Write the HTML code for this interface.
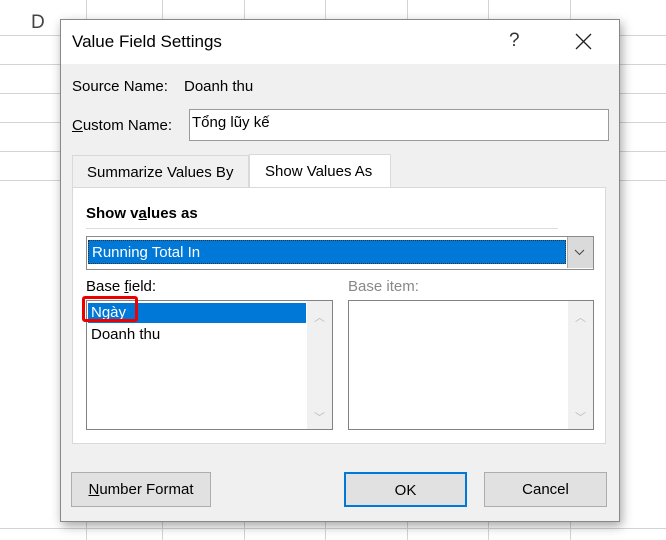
<!DOCTYPE html>
<html><head><meta charset="utf-8"><style>
body{margin:0;width:666px;height:540px;overflow:hidden;background:#fff;font-family:"Liberation Sans",sans-serif;position:relative;font-size:14px;color:#000}
.a{position:absolute}
.h{position:absolute;left:0;width:666px;height:1px;background:#d4d4d4}
.v{position:absolute;top:0;height:540px;width:1px;background:#d4d4d4}
.dlg{position:absolute;left:60px;top:19px;width:558px;height:501px;background:#f0f0f0;border:1px solid #888;box-shadow:2px 4px 10px rgba(0,0,0,.35)}
.btn{position:absolute;background:#e1e1e1;border:1px solid #adadad;text-align:center;line-height:33px;font-size:15px}
.list{position:absolute;background:#fff;border:1px solid #828282}
.sb{position:absolute;right:0;top:0;bottom:0;width:25px;background:#f0f0f0;color:#bbb;font-size:11px;text-align:center}
</style></head><body>
<div class="h" style="top:35px"></div><div class="h" style="top:64px"></div><div class="h" style="top:93px"></div><div class="h" style="top:122px"></div><div class="h" style="top:151px"></div><div class="h" style="top:180px"></div><div class="h" style="top:528px"></div>
<div class="v" style="left:86px"></div><div class="v" style="left:162px"></div><div class="v" style="left:244px"></div><div class="v" style="left:325px"></div><div class="v" style="left:407px"></div><div class="v" style="left:488px"></div><div class="v" style="left:570px"></div>
<div class="a" style="left:31px;top:12px;font-size:19px;color:#444">D</div>
<div class="dlg">
 <div class="a" style="left:0;top:0;width:558px;height:44px;background:#fff"></div>
 <div class="a" style="left:11px;top:12px;font-size:17px">Value Field Settings</div>
 <div class="a" style="left:448px;top:10px;font-size:19px;color:#333">?</div>
 <svg class="a" style="left:514px;top:13px" width="17" height="17"><path d="M1 1L16 16M16 1L1 16" stroke="#222" stroke-width="1.3"/></svg>
 <div class="a" style="left:11px;top:58px;font-size:15px">Source Name:</div>
 <div class="a" style="left:123px;top:58px;font-size:15px">Doanh thu</div>
 <div class="a" style="left:11px;top:97px;font-size:15px"><u>C</u>ustom Name:</div>
 <div class="a" style="left:128px;top:89px;width:418px;height:30px;background:#fff;border:1px solid #9a9a9a"></div>
 <div class="a" style="left:131px;top:94px;font-size:15px">Tổng lũy kế</div>
 <div class="a" style="left:11px;top:135px;width:177px;height:32px;border:1px solid #d9d9d9;border-bottom:none;box-sizing:border-box"></div>
 <div class="a" style="left:26px;top:144px;font-size:15px">Summarize Values By</div>
 <div class="a" style="left:188px;top:134px;width:142px;height:34px;background:#fff;border:1px solid #d9d9d9;border-bottom:none;box-sizing:border-box"></div>
 <div class="a" style="left:204px;top:143px;font-size:15px">Show Values As</div>
 <div class="a" style="left:11px;top:167px;width:534px;height:257px;background:#fff;border:1px solid #d9d9d9;box-sizing:border-box"></div>
 <div class="a" style="left:25px;top:185px;font-size:15px;font-weight:bold">Show v<u>a</u>lues as</div>
 <div class="a" style="left:25px;top:208px;width:472px;height:1px;background:#ddd"></div>
 <div class="a" style="left:25px;top:216px;width:506px;height:32px;background:#fff;border:1px solid #8a8a8a"></div>
 <div class="a" style="left:27px;top:220px;width:478px;height:24px;background:#0078d7;border:1px dotted #333;box-sizing:border-box"></div>
 <div class="a" style="left:31px;top:224px;font-size:15px;color:#fff">Running Total In</div>
 <div class="a" style="left:506px;top:217px;width:25px;height:31px;background:#dadada;border-left:1px solid #aaa"></div>
 <svg class="a" style="left:513px;top:229px" width="11" height="7"><path d="M1 1L5.5 5.5L10 1" stroke="#444" fill="none"/></svg>
 <div class="a" style="left:25px;top:258px;font-size:15px">Base <u>f</u>ield:</div>
 <div class="a" style="left:287px;top:258px;font-size:15px;color:#888">Base item:</div>
 <div class="list" style="left:25px;top:280px;width:245px;height:128px">
  <div class="a" style="left:1px;top:2px;width:218px;height:20px;background:#0078d7"></div>
  <div class="a" style="left:4px;top:3px;font-size:15px;color:#fff">Ngày</div>
  <div class="a" style="left:4px;top:25px;font-size:15px">Doanh thu</div>
  <div class="sb"><div style="margin-top:8px">︿</div><div style="position:absolute;bottom:4px;width:25px">﹀</div></div>
 </div>
 <div class="a" style="left:21px;top:276px;width:56px;height:26px;border:3px solid #e00;border-radius:3px;box-sizing:border-box"></div>
 <div class="list" style="left:287px;top:280px;width:244px;height:128px"><div class="sb"><div style="margin-top:8px">︿</div><div style="position:absolute;bottom:4px;width:25px">﹀</div></div></div>
 <div class="btn" style="left:10px;top:452px;width:138px;height:33px"><u>N</u>umber Format</div>
 <div class="btn" style="left:283px;top:452px;width:119px;height:31px;border:2px solid #0078d7">OK</div>
 <div class="btn" style="left:423px;top:452px;width:121px;height:33px">Cancel</div>
</div>
</body></html>
